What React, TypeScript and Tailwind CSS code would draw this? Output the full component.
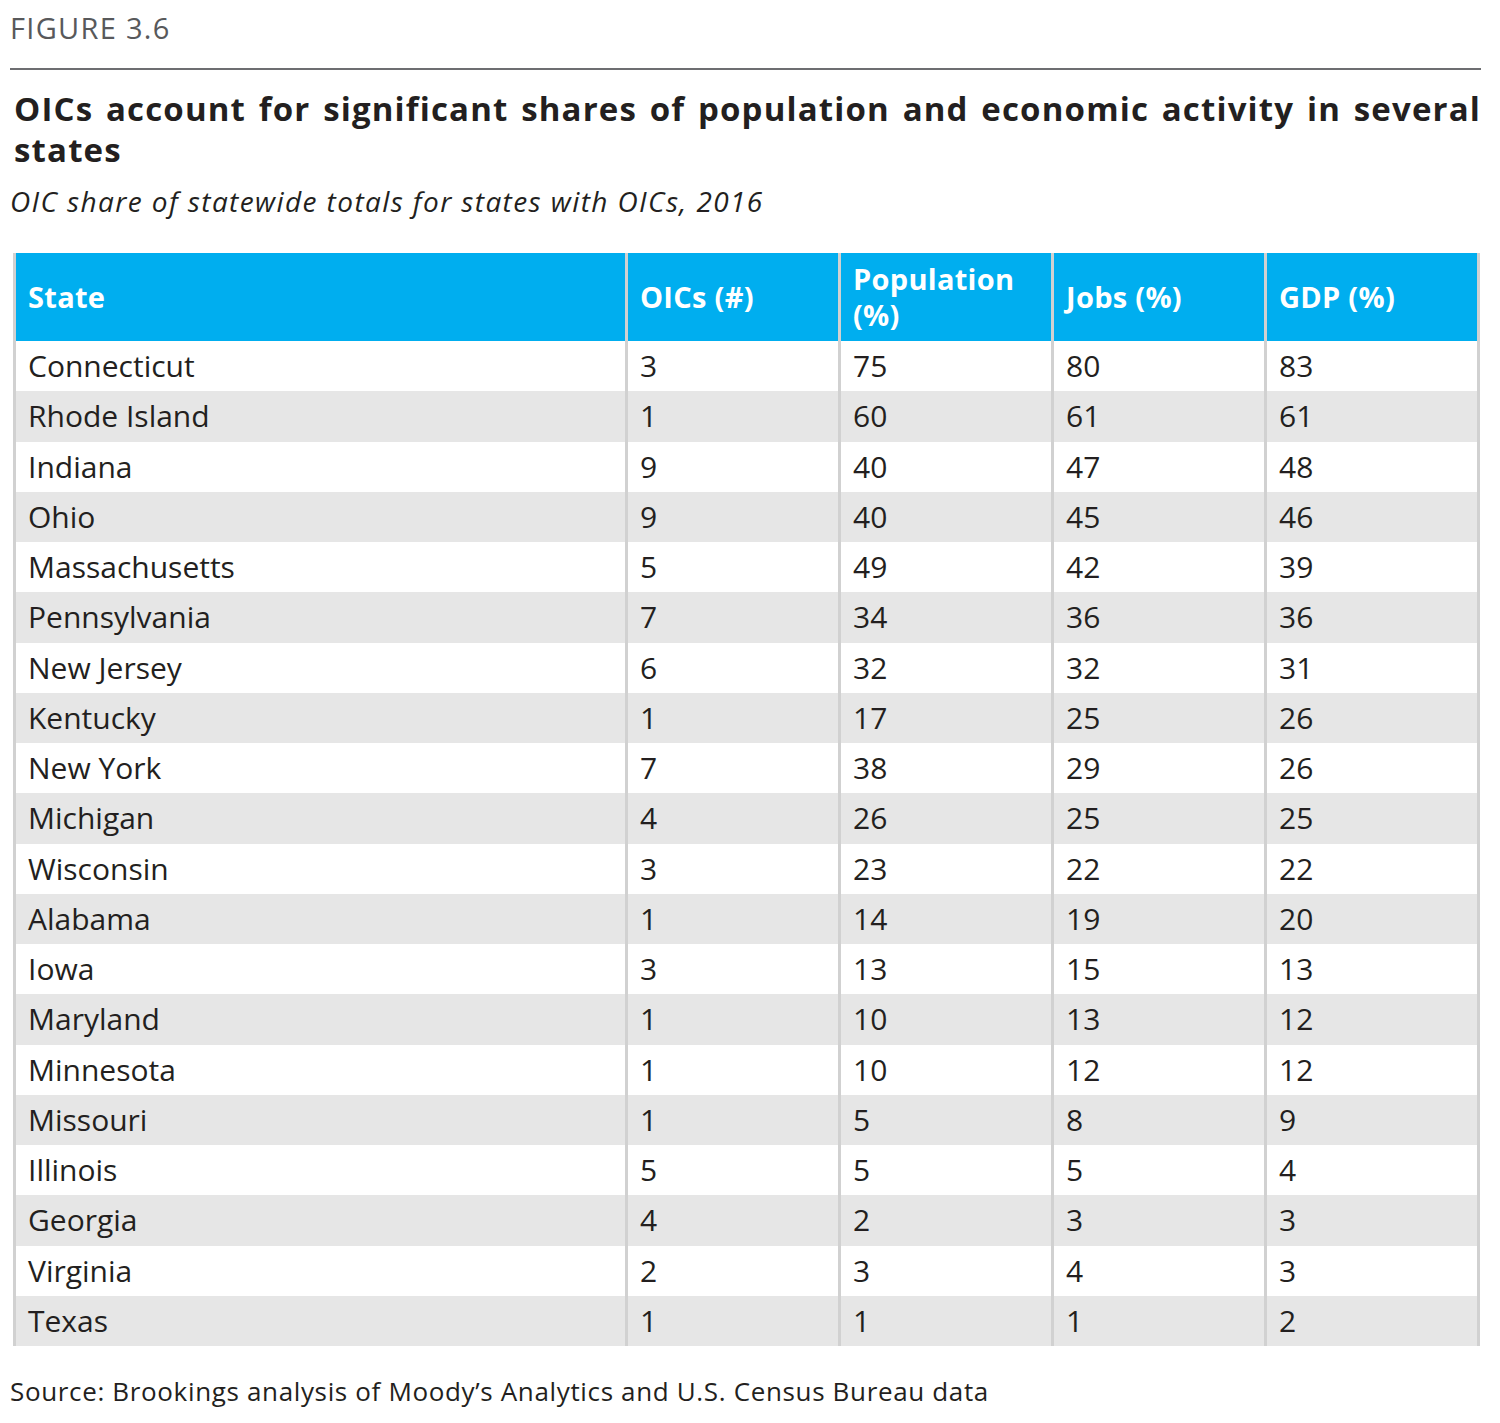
const rows: [string, number, number, number, number][] = [
  ['Connecticut', 3, 75, 80, 83],
  ['Rhode Island', 1, 60, 61, 61],
  ['Indiana', 9, 40, 47, 48],
  ['Ohio', 9, 40, 45, 46],
  ['Massachusetts', 5, 49, 42, 39],
  ['Pennsylvania', 7, 34, 36, 36],
  ['New Jersey', 6, 32, 32, 31],
  ['Kentucky', 1, 17, 25, 26],
  ['New York', 7, 38, 29, 26],
  ['Michigan', 4, 26, 25, 25],
  ['Wisconsin', 3, 23, 22, 22],
  ['Alabama', 1, 14, 19, 20],
  ['Iowa', 3, 13, 15, 13],
  ['Maryland', 1, 10, 13, 12],
  ['Minnesota', 1, 10, 12, 12],
  ['Missouri', 1, 5, 8, 9],
  ['Illinois', 5, 5, 5, 4],
  ['Georgia', 4, 2, 3, 3],
  ['Virginia', 2, 3, 4, 3],
  ['Texas', 1, 1, 1, 2],
];

const headers = ['State', 'OICs (#)', 'Population (%)', 'Jobs (%)', 'GDP (%)'];

export default function App() {
  return (
    <div className="w-[1500px] min-h-[1423px] bg-white font-['Open_Sans',sans-serif] text-[#231f20]">
      <div className="w-[1471px] ml-[10px] pt-[10px]">
        {/* Figure label */}
        <p className="text-[29px] leading-[36px] text-[#58595b] tracking-[0.045em]">FIGURE 3.6</p>

        <div className="mt-[22px] h-[2px] bg-[#6d6e71]" />

        {/* Title */}
        <h2 className="mt-[18px] ml-[4px] text-[33px] leading-[41px] font-bold tracking-[0.035em] text-[#231f20]">
          <span className="block text-justify [text-align-last:justify]">
            OICs account for significant shares of population and economic activity in several
          </span>
          <span className="block">states</span>
        </h2>

        <p className="mt-[14px] text-[28px] leading-[34px] italic tracking-[0.05em] text-[#231f20]">
          OIC share of statewide totals for states with OICs, 2016
        </p>

        {/* Table */}
        <div className="mt-[35px] ml-[3px] w-[1467px] grid grid-cols-[609px_210px_210px_210px_210px] gap-x-[3px] bg-[#d1d1d1] border-x-[3px] border-[#d1d1d1]">
          {headers.map((h) => (
            <div
              key={h}
              className="h-[88px] bg-[#00aeef] flex items-center pl-[12px] pr-[8px] text-white font-bold text-[29px] leading-[36px] tracking-[0.01em]"
            >
              {h}
            </div>
          ))}
          {rows.map((r, i) =>
            r.map((cell, j) => (
              <div
                key={`${i}-${j}`}
                className={`h-[50.25px] flex items-center pl-[12px] text-[30px] leading-[36px] ${
                  i % 2 === 0 ? 'bg-white' : 'bg-[#e6e6e6]'
                }`}
              >
                {cell}
              </div>
            ))
          )}
        </div>

        <p className="mt-[29px] text-[26px] leading-[32px] tracking-[0.025em] text-[#231f20]">
          Source: Brookings analysis of Moody’s Analytics and U.S. Census Bureau data
        </p>
      </div>
    </div>
  );
}
